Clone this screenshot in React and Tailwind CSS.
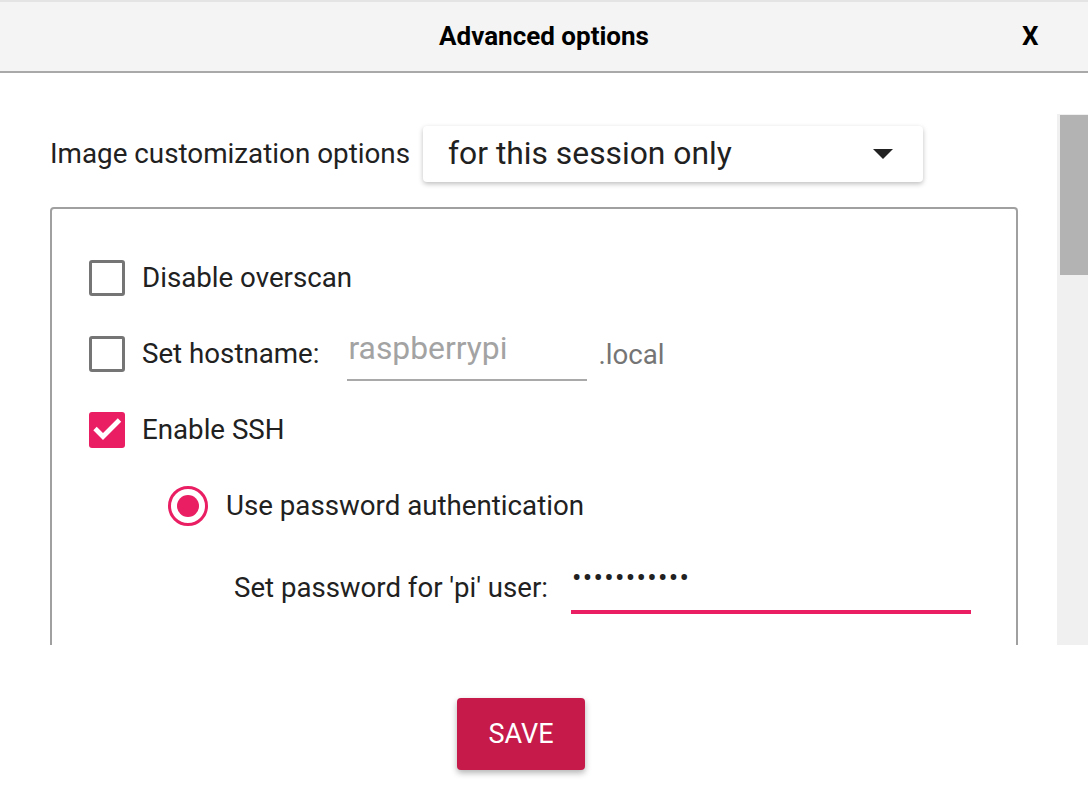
import React from "react";

const font = { fontFamily: "Roboto, 'Noto Sans', sans-serif" };

function Checkbox({ checked }) {
  if (checked) {
    return (
      <div className="w-[36px] h-[36px] rounded-[3px] bg-[#e91e63] shrink-0">
        <svg width="36" height="36" viewBox="0 0 36 36">
          <path d="M6 16.5 L14 24.5 L30.5 8" fill="none" stroke="#fff" strokeWidth="4.8" />
        </svg>
      </div>
    );
  }
  return <div className="w-[36px] h-[36px] rounded-[3px] border-[3px] border-[#757575] bg-white shrink-0" />;
}

export default function App() {
  return (
    <div className="w-[1088px] h-[800px] bg-white text-[#212121] overflow-hidden" style={font}>
      {/* title bar */}
      <div className="h-[73px] bg-[#f4f4f4] border-t-2 border-[#e4e4e4] border-b-2 border-b-[#a9a9a9] flex items-center relative">
        <div className="flex-1 text-center text-[26px] font-bold text-black">Advanced options</div>
        <div className="absolute left-[1022px] text-[26px] font-bold text-black">X</div>
      </div>

      {/* scrolling area */}
      <div className="pt-[41px] flex">
        <div className="flex-1 h-[531px] overflow-hidden pl-[50px] pr-[39px]">
          <div className="flex items-center mt-[12px]">
            <span className="text-[27.8px]">Image customization options</span>
            <div className="ml-[13px] w-[500px] h-[56px] rounded-[4px] bg-white shadow-[0_2px_5px_rgba(0,0,0,0.25)] flex items-center pl-[25px] pr-[30px]">
              <span className="flex-1 text-[31.8px] leading-none">for this session only</span>
              <svg width="20" height="10" viewBox="0 0 20 10">
                <path d="M0 0 L20 0 L10 10 Z" fill="#222" />
              </svg>
            </div>
          </div>

          <div className="mt-[25px] border-2 border-[#a0a0a0] rounded-[4px] h-[600px] pl-[37px] pt-[51px] flex flex-col">
            <div className="flex items-center h-[36px]">
              <Checkbox />
              <span className="ml-[17px] text-[27.7px]">Disable overscan</span>
            </div>

            <div className="flex items-center h-[36px] mt-[40px]">
              <Checkbox />
              <span className="ml-[17px] text-[27.7px]">Set hostname:</span>
              <div className="ml-[28px] w-[240px] h-[54px] border-b-2 border-[#a9a9a9] flex items-start">
                <span className="text-[31.8px] leading-[42px] text-[#a3a3a3] pl-[1px]">raspberrypi</span>
              </div>
              <span className="ml-[11px] text-[27.7px] text-[#757575] mt-[2px]">.local</span>
            </div>

            <div className="flex items-center h-[36px] mt-[40px]">
              <Checkbox checked />
              <span className="ml-[17px] text-[27.7px]">Enable SSH</span>
            </div>

            <div className="flex items-center h-[36px] mt-[40px] pl-[79px]">
              <div className="w-[40px] h-[40px] rounded-full border-[3px] border-[#e91e63] flex items-center justify-center shrink-0">
                <div className="w-[22px] h-[22px] rounded-full bg-[#e91e63]" />
              </div>
              <span className="ml-[18px] text-[27.7px]">Use password authentication</span>
            </div>

            <div className="flex items-center h-[36px] mt-[46px] pl-[145px]">
              <span className="text-[27.6px]">Set password for 'pi' user:</span>
              <div className="ml-[23px] w-[400px] h-[52px] border-b-4 border-[#e91e63] flex items-start">
                <span className="text-[28px] tracking-[1.3px] pl-[1px] leading-[32px]">•••••••••••</span>
              </div>
            </div>
          </div>
        </div>

        {/* scrollbar */}
        <div className="w-[31px] h-[531px] bg-[#f0f0f0] pl-[3px] pt-[1px]">
          <div className="h-[160px] bg-[#b3b3b3]" />
        </div>
      </div>

      {/* footer */}
      <div className="flex justify-center pt-[53px] pr-[46px]">
        <button className="w-[128px] h-[72px] rounded-[4px] bg-[#c51a4a] text-white text-[27px] shadow-[0_3px_6px_rgba(0,0,0,0.3)]">
          SAVE
        </button>
      </div>
    </div>
  );
}
